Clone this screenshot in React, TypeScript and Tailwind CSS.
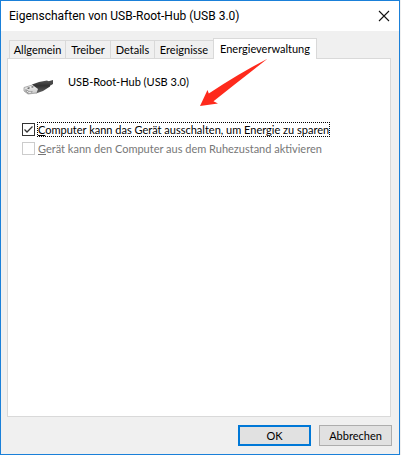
import { useState } from 'react'

const tabs = [
  { label: 'Allgemein', width: 'w-[57px]' },
  { label: 'Treiber', width: 'w-[46px]' },
  { label: 'Details', width: 'w-[45px]' },
  { label: 'Ereignisse', width: 'w-[60px]' },
  { label: 'Energieverwaltung', width: 'w-[104px]' },
]

function Tab({
  label,
  width,
  active,
  onSelect,
}: {
  label: string
  width: string
  active: boolean
  onSelect: () => void
}) {
  return (
    <button
      type="button"
      role="tab"
      aria-selected={active}
      onClick={onSelect}
      className={[
        'shrink-0 border border-[#d9d9d9] border-b-0 text-center whitespace-nowrap -mr-px',
        width,
        active ? 'h-[21px] bg-white relative z-10 -mb-px pb-px' : 'h-[18px] bg-[#f0f0f0]',
      ].join(' ')}
    >
      {label}
    </button>
  )
}

interface OptionProps {
  id: string
  accessKey: string
  text: string
  checked?: boolean
  disabled?: boolean
  focused?: boolean
  onChange?: (checked: boolean) => void
}

function Option({ id, accessKey, text, checked = false, disabled, focused, onChange }: OptionProps) {
  return (
    <div className="flex items-center gap-0.5">
      <span className="relative size-[13px] shrink-0">
        <input
          id={id}
          type="checkbox"
          checked={checked}
          disabled={disabled}
          onChange={(e) => onChange?.(e.target.checked)}
          className="block size-[13px] appearance-none border border-[#333333] bg-white disabled:border-[#cccccc]"
        />
        {checked && (
          <svg viewBox="0 0 13 13" className="pointer-events-none absolute inset-0 size-[13px]" fill="none">
            <path d="M2.5 6.5 5 9l5.5-5.5" stroke="#333333" strokeWidth="1.3" />
          </svg>
        )}
      </span>
      <label
        htmlFor={id}
        className={[
          'border border-dotted whitespace-nowrap h-[15px] leading-[13px]',
          focused ? 'border-black' : 'border-transparent',
          disabled ? 'text-[#777777]' : 'text-black',
        ].join(' ')}
      >
        <span className="underline underline-offset-1">{accessKey}</span>
        {text}
      </label>
    </div>
  )
}

function UsbPlugIcon() {
  return (
    <svg viewBox="0 0 32 16" className="h-4 w-8 shrink-0" aria-hidden="true">
      <defs>
        <linearGradient id="plug" x1="0" y1="0" x2="0" y2="1">
          <stop offset="0" stopColor="#555555" />
          <stop offset="0.4" stopColor="#333333" />
          <stop offset="1" stopColor="#666666" />
        </linearGradient>
        <linearGradient id="metal" x1="0" y1="0" x2="0" y2="1">
          <stop offset="0" stopColor="#f6f6f6" />
          <stop offset="1" stopColor="#c4c4c4" />
        </linearGradient>
      </defs>
      <path d="M24 3 31 1v4l-6 3.500Z" fill="#484848" />
      <path d="M10 5.500 17 3l8-1.500 3 1.500v4.500l-7 4.500-7 2.500Z" fill="url(#plug)" />
      <path d="m2 8.500 8.500-2.500 5.500 4-1.500 4-8.500 1-4-3Z" fill="url(#metal)" />
      <path d="m2 8.500 8.500-2.500M2 8.500v3.500l4 3 8.500-1" fill="none" stroke="#9a9a9a" strokeWidth="0.8" />
      <path d="m3.500 10 4 2.500 3-.5-.5 2-4 .5-2.500-2Z" fill="#8a8a8a" />
      <path d="m5 9 2-.7 1.200.8-2 .8ZM9 7.800l1.800-.6 1.200.9-2 .7Z" fill="#555555" />
      <path d="m4.500 12 2.500 1.500 2.500-.3" stroke="#f0f0f0" strokeWidth="1" fill="none" />
    </svg>
  )
}

export default function App() {
  const [active, setActive] = useState('Energieverwaltung')
  const [allowOff, setAllowOff] = useState(true)

  return (
    <div className="min-h-screen bg-[#f0f0f0] pr-px">
      <main className="flex min-h-screen flex-col border border-[#1a80d9] bg-[#f0f0f0] font-['Lato',sans-serif] text-[11px] leading-[14px] text-black">
        <header className="flex h-[30px] items-center justify-between bg-white pr-[9px] pl-2">
          <h1 className="font-['Roboto',sans-serif] text-[12px] whitespace-nowrap">
            Eigenschaften von USB-Root-Hub (USB 3.0)
          </h1>
          <button type="button" aria-label="Schließen" className="flex size-3 items-center justify-center">
            <svg viewBox="0 0 12 12" className="size-3" fill="none">
              <path d="m1 1 10 10M11 1 1 11" stroke="#111111" strokeWidth="1.1" />
            </svg>
          </button>
        </header>

        <div className="flex flex-1 flex-col px-1.5 pt-[7px] pr-2 pb-2">
          <div role="tablist" className="flex items-end pl-0.5">
            {tabs.map((tab) => (
              <Tab
                key={tab.label}
                label={tab.label}
                width={tab.width}
                active={tab.label === active}
                onSelect={() => setActive(tab.label)}
              />
            ))}
          </div>

          <section role="tabpanel" className="relative flex-1 border border-[#d9d9d9] bg-white pt-5 pl-3.5">
            <div className="flex items-start gap-3.5">
              <UsbPlugIcon />
              <p className="-mt-1">USB-Root-Hub (USB 3.0)</p>
            </div>

            <div className="mt-[27px] flex flex-col gap-1">
              <Option
                id="allow-off"
                accessKey="C"
                text="omputer kann das Gerät ausschalten, um Energie zu sparen"
                checked={allowOff}
                focused
                onChange={setAllowOff}
              />
              <Option
                id="allow-wake"
                accessKey="G"
                text="erät kann den Computer aus dem Ruhezustand aktivieren"
                disabled
              />
            </div>

            <svg viewBox="0 0 68 47" className="absolute top-0 left-48 h-[47px] w-[68px]" aria-hidden="true">
              <path d="M67 0Q66 1 34 26L13.500 42.300 18 44.500 0 47 7.500 31 8.800 34.500Q38 15 67 0Z" fill="#fe2a1c" />
            </svg>
          </section>

          <footer className="-mr-px flex justify-end gap-2 pt-2">
            <button type="button" className="h-[21px] w-[73px] border-2 border-[#0078d7] bg-[#e1e1e1] leading-4">
              OK
            </button>
            <button type="button" className="h-[21px] w-[73px] border border-[#adadad] bg-[#e1e1e1]">
              Abbrechen
            </button>
          </footer>
        </div>
      </main>
    </div>
  )
}
